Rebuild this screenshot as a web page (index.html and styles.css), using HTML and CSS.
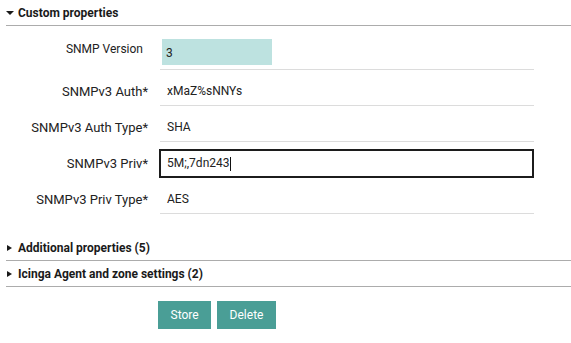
FILE: index.html
```html
<!DOCTYPE html>
<html lang="en">
<head>
  <meta charset="UTF-8">
  <title>Host properties</title>
  <link rel="stylesheet" href="styles.css">
</head>
<body>
  <form class="host-form">
    <div class="section">
      <div class="section-title"><span class="toggle down"></span>Custom properties</div>
      <div class="row first">
        <div class="row-label plain">SNMP Version</div>
        <div class="row-field"><span class="select-box">3</span></div>
      </div>
      <div class="row">
        <div class="row-label">SNMPv3 Auth*</div>
        <div class="row-field"><span class="value">xMaZ%sNNYs</span></div>
      </div>
      <div class="row">
        <div class="row-label">SNMPv3 Auth Type*</div>
        <div class="row-field"><span class="value">SHA</span></div>
      </div>
      <div class="row">
        <div class="row-label">SNMPv3 Priv*</div>
        <div class="row-field focused"><span class="value">5M;,7dn243</span><span class="caret"></span></div>
      </div>
      <div class="row">
        <div class="row-label">SNMPv3 Priv Type*</div>
        <div class="row-field"><span class="value">AES</span></div>
      </div>
    </div>
    <div class="section collapsed spaced">
      <div class="section-title"><span class="toggle right"></span>Additional properties (5)</div>
    </div>
    <div class="section collapsed">
      <div class="section-title"><span class="toggle right"></span>Icinga Agent and zone settings (2)</div>
    </div>
    <div class="actions">
      <button type="button" class="btn">Store</button>
      <button type="button" class="btn">Delete</button>
    </div>
  </form>
</body>
</html>
```

FILE: styles.css
```css
body {
  margin: 0;
  font-family: Roboto, "Liberation Sans", sans-serif;
  font-size: 12px;
  color: #222;
  background: #fff;
}
.host-form {
  padding-left: 6px;
}
.section-title {
  display: flex;
  align-items: center;
  height: 26px;
  box-sizing: border-box;
  border-bottom: 1px solid #acacac;
  font-weight: bold;
  color: #1a1a1a;
}
.spaced {
  margin-top: 21px;
}
.toggle {
  display: inline-block;
  width: 0;
  height: 0;
}
.toggle.down {
  border-left: 4px solid transparent;
  border-right: 4px solid transparent;
  border-top: 4px solid #1a1a1a;
  margin-right: 4px;
}
.toggle.right {
  border-top: 3.5px solid transparent;
  border-bottom: 3.5px solid transparent;
  border-left: 5px solid #1a1a1a;
  margin-left: 1px;
  margin-right: 6px;
}

/* form rows */
.row {
  display: flex;
  align-items: flex-start;
  height: 36px;
}
.row.first {
  height: 44px;
}
.row-label {
  width: 154px;
  padding: 14px 12px 0 0;
  box-sizing: border-box;
  text-align: right;
  font-size: 13px;
  line-height: 15px;
}
.row-label.plain {
  font-size: 12px;
  padding-right: 17px;
}
.row.first .row-label {
  padding-top: 16px;
}
.row-field {
  width: 374px;
  height: 36px;
  box-sizing: border-box;
  border-bottom: 1px solid #dcdcdc;
  padding-top: 14px;
  line-height: 15px;
}
.row.first .row-field {
  height: 44px;
  padding-top: 13px;
}
.row-field .value {
  padding-left: 7px;
}
.select-box {
  display: flex;
  align-items: center;
  margin-left: 2px;
  width: 110px;
  height: 26px;
  padding: 3px 0 0 4px;
  box-sizing: border-box;
  background: #bde2e0;
}
.row-field.focused {
  display: flex;
  align-items: center;
  width: 375px;
  height: 29px;
  margin: 7px 0 0 -1px;
  padding: 0;
  border: 2px solid #1c1c1c;
}
.row-field.focused .value {
  padding-left: 6px;
}
.caret {
  width: 1px;
  height: 14px;
  background: #111;
}
.actions {
  display: flex;
  gap: 6px;
  padding-left: 152px;
  margin-top: 14px;
}
.btn {
  height: 28px;
  padding: 0 12.5px;
  border: none;
  background: #4a9e96;
  color: #fff;
  font-family: Roboto, "Liberation Sans", sans-serif;
  font-size: 12px;
}
```
